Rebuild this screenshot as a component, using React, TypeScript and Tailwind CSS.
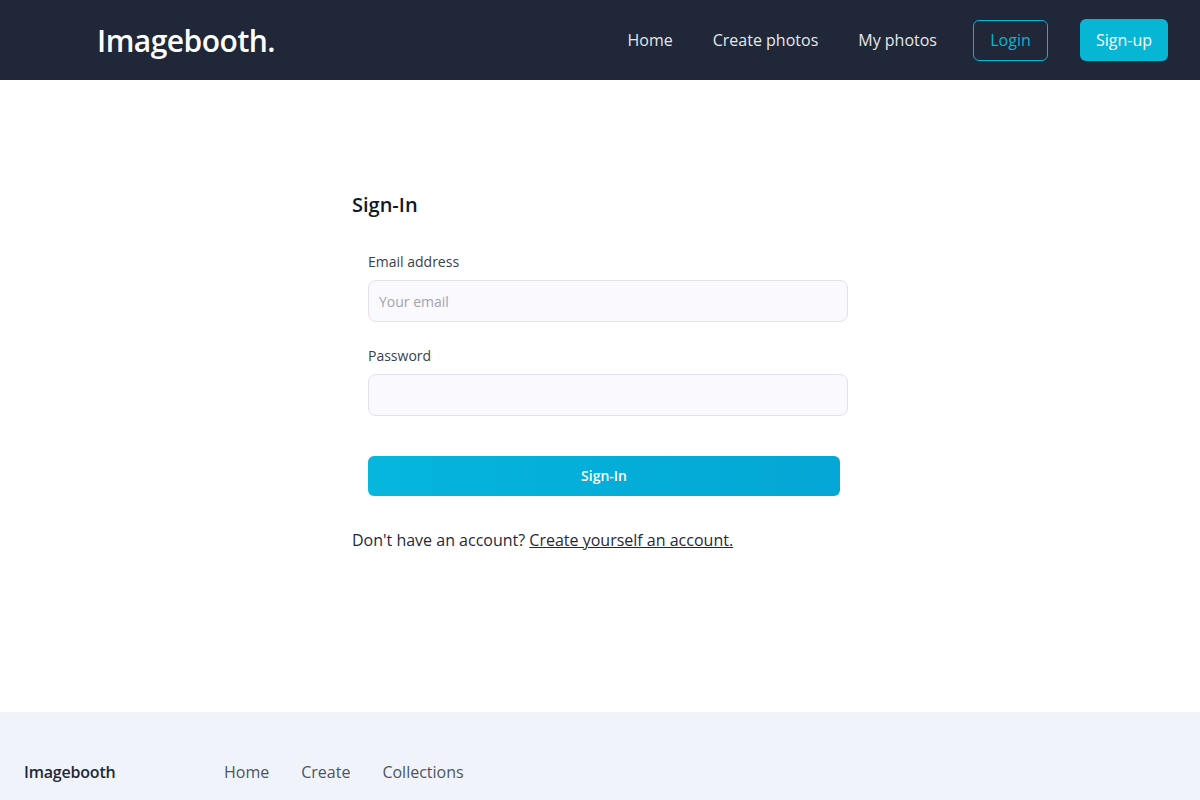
const font = { fontFamily: '"Open Sans", "Noto Sans", sans-serif' };

function Header() {
  return (
    <header className="flex h-20 items-center justify-between bg-[#202738] pl-[97px] pr-[32px]">
      <a href="#" className="text-[30px] font-semibold tracking-[-0.5px] text-white">
        Imagebooth.
      </a>
      <nav className="flex items-center text-base text-[#e5e7eb]">
        <a href="#" className="mr-10">Home</a>
        <a href="#" className="mr-10">Create photos</a>
        <a href="#" className="mr-9">My photos</a>
        <a
          href="#"
          className="mr-8 flex h-[41px] w-[75px] items-center justify-center rounded-md border border-[#06b6d4] text-[#06b6d4]"
        >
          Login
        </a>
        <a
          href="#"
          className="flex h-[42px] w-[88px] items-center justify-center rounded-md bg-[#06b6d4] text-white"
        >
          Sign-up
        </a>
      </nav>
    </header>
  );
}

function SignInForm() {
  return (
    <div className="mx-auto w-[496px] pt-[111px] pb-[160px]">
      <h1 className="text-xl font-semibold text-[#111827]">Sign-In</h1>
      <form className="mt-[33px] pl-4">
        <label className="block text-sm text-[#374151]">Email address</label>
        <input
          type="email"
          placeholder="Your email"
          className="mt-[8px] block h-[42px] w-full rounded-lg border border-[#e2e0ea] bg-[#faf9fd] px-[10px] text-sm text-[#374151] placeholder:text-[#a3a3ad] outline-none"
        />
        <label className="mt-[24px] block text-sm text-[#374151]">Password</label>
        <input
          type="password"
          className="mt-[8px] block h-[42px] w-full rounded-lg border border-[#e2e0ea] bg-[#faf9fd] px-[10px] text-sm outline-none"
        />
        <button
          type="button"
          className="mt-[40px] block h-10 w-[472px] rounded-md bg-gradient-to-r from-[#06b6dc] to-[#03a6d4] text-sm font-semibold text-white"
        >
          Sign-In
        </button>
      </form>
      <p className="mt-[32px] text-base text-[#1f2937]">
        Don't have an account?{" "}
        <a href="#" className="underline">Create yourself an account.</a>
      </p>
    </div>
  );
}

function Footer() {
  return (
    <footer className="flex h-[120px] items-center bg-[#f1f3fb] pl-6">
      <span className="w-[200px] text-base font-semibold tracking-[-0.2px] text-[#1f2937]">Imagebooth</span>
      <nav className="flex gap-8 text-base text-[#4b5563]">
        <a href="#">Home</a>
        <a href="#">Create</a>
        <a href="#">Collections</a>
      </nav>
    </footer>
  );
}

export default function App() {
  return (
    <div style={font} className="min-h-screen bg-white">
      <Header />
      <main>
        <SignInForm />
      </main>
      <Footer />
    </div>
  );
}
